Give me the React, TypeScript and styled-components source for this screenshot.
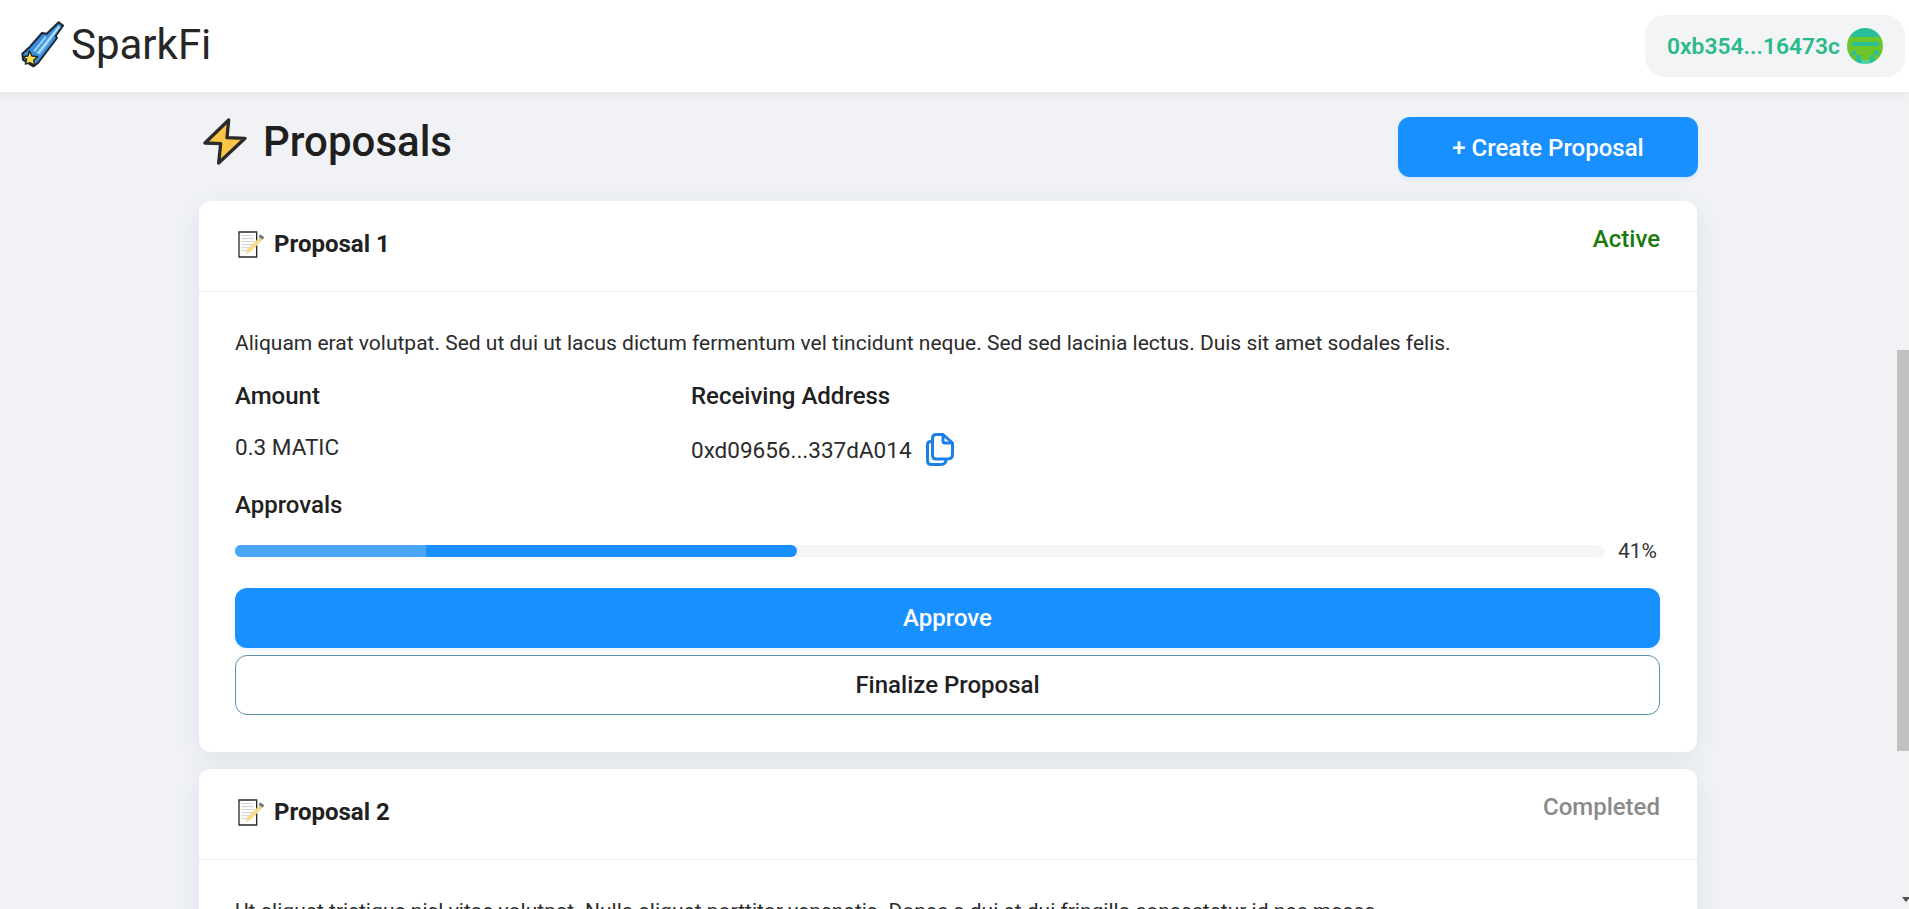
import React from "react";
import styled, { createGlobalStyle } from "styled-components";

const Global = createGlobalStyle`
  html, body { margin: 0; padding: 0; height: 100%; overflow: hidden; }
  body { font-family: Roboto, "Liberation Sans", sans-serif; color: #212121; background: #f0f2f5; }
  * { box-sizing: border-box; }
`;

const Page = styled.div`
  position: relative;
  height: 909px;
  overflow: hidden;
  background: #f0f2f5;
`;
const TopBar = styled.header`
  position: relative;
  z-index: 2;
  height: 92px;
  background: #fff;
  box-shadow: 0 2px 8px rgba(0, 0, 0, 0.06);
  display: flex;
  align-items: center;
  justify-content: space-between;
  padding: 0 4px 0 20px;
`;
const Brand = styled.div`
  display: flex;
  align-items: center;
  gap: 7px;
  font-size: 42px;
  font-weight: 400;
  line-height: 47px;
  margin-top: -3px;
  color: #262626;
`;
const Wallet = styled.div`
  width: 260px;
  height: 62px;
  border-radius: 20px;
  background: #f3f4f6;
  display: flex;
  align-items: center;
  gap: 7px;
  padding-left: 22px;
  font-size: 22.8px;
  font-weight: 600;
  color: #2ab98a;
`;
const Main = styled.main`
  padding: 25px 0 0 199px;
  width: 1697px;
`;
const TitleRow = styled.div`
  display: flex;
  justify-content: space-between;
  align-items: flex-start;
  padding-left: 4px;
  margin-bottom: 24px;
`;
const Title = styled.h1`
  margin: 1px 0 0;
  display: flex;
  align-items: center;
  gap: 16px;
  font-size: 42px;
  line-height: 47px;
  font-weight: 500;
  color: #1f1f1f;
`;
const PrimaryButton = styled.button<{ $wide?: boolean }>`
  width: ${(p) => (p.$wide ? "100%" : "300px")};
  height: 60px;
  margin-right: ${(p) => (p.$wide ? "0" : "-1px")};
  padding: ${(p) => (p.$wide ? "0" : "2px 0 0")};
  border: none;
  border-radius: 12px;
  background: #1890ff;
  color: #fff;
  font-family: inherit;
  font-size: 24px;
  font-weight: 500;
  box-shadow: 0 2px 4px rgba(24, 144, 255, 0.12);
`;
const OutlineButton = styled.button`
  width: 100%;
  height: 60px;
  margin-top: 7px;
  border: 1px solid #5a8fab;
  border-radius: 12px;
  background: #fff;
  color: #1f1f1f;
  font-family: inherit;
  font-size: 24px;
  font-weight: 500;
`;
const Card = styled.section`
  background: #fff;
  border-radius: 12px;
  margin-bottom: 17px;
  box-shadow: 0 6px 24px rgba(120, 135, 170, 0.14);
`;
const CardHead = styled.div`
  height: 91px;
  border-bottom: 1px solid #eeeff1;
  display: flex;
  justify-content: space-between;
  align-items: flex-start;
  padding: 24px 37px 0 36px;
`;
const CardName = styled.div`
  display: flex;
  align-items: center;
  gap: 9px;
  padding: 6px 0 0 3px;
  font-size: 24px;
  line-height: 27px;
  font-weight: 700;
  color: #212121;
`;
const Status = styled.div<{ $color: string }>`
  font-size: 24px;
  line-height: 28px;
  font-weight: 500;
  color: ${(p) => p.$color};
`;
const CardBody = styled.div`
  padding: 37px 37px 37px 36px;
`;
const Description = styled.p`
  margin: 0 0 25px;
  font-size: 21px;
  line-height: 28px;
  color: #2b2b2b;
`;
const Facts = styled.div`
  display: flex;
  margin-bottom: 25px;
`;
const Fact = styled.div<{ $width?: number }>`
  width: ${(p) => (p.$width ? `${p.$width}px` : "auto")};
`;
const Label = styled.div`
  font-size: 24px;
  line-height: 28px;
  font-weight: 500;
  color: #212121;
  margin-bottom: 23px;
`;
const ApprovalLabel = styled(Label)`
  margin-bottom: 18px;
`;
const Value = styled.div`
  display: flex;
  align-items: flex-start;
  font-size: 22.5px;
  line-height: 28px;
  color: #2b2b2b;
`;
const Address = styled.div`
  display: flex;
  align-items: center;
  gap: 14px;
  height: 33px;
  font-size: 22.5px;
  line-height: 28px;
  color: #2b2b2b;
`;
const ProgressRow = styled.div`
  display: flex;
  align-items: center;
  height: 28px;
  margin-bottom: 23px;
`;
const Track = styled.div`
  position: relative;
  width: 1370px;
  height: 12px;
  border-radius: 6px;
  background: #f5f5f5;
  overflow: hidden;
`;
const Fill = styled.div`
  height: 100%;
  border-radius: 6px;
  background: #1890ff;
`;
const FillPart = styled.div`
  height: 100%;
  background: #4ba6fb;
`;
const Percent = styled.span`
  margin-left: 13px;
  font-size: 21px;
  color: #333;
`;
const Scrollbar = styled.div`
  position: absolute;
  top: 92px;
  right: 0;
  bottom: 0;
  width: 12px;
  background: #f1f2f4;
  overflow: hidden;
`;
const Thumb = styled.div`
  position: absolute;
  top: 258px;
  left: 0;
  width: 100%;
  height: 401px;
  background: #c1c1c1;
`;
const ArrowDown = styled.div`
  position: absolute;
  bottom: 7px;
  left: 5px;
  border-left: 4px solid transparent;
  border-right: 4px solid transparent;
  border-top: 5px solid #505050;
`;

const Comet = () => (
  <svg width="44" height="47" viewBox="30 33 132 141" aria-hidden>
    <path d="M146 37 L159 47 L137 78 L141 84 L84 159 L70 169 L39 150 L37 131 L60 110 L96 69 L110 71 Z" fill="#3a8edb" stroke="#1d2733" strokeWidth="6" strokeLinejoin="round" />
    <path d="M146 46 L78 128 L90 136 L152 52 Z" fill="#6db8ee" />
    <path d="M146 48 L84 128 L86 131 L149 51 Z" fill="#d5eeff" />
    <path d="M106 78 L70 122 L74 126 L110 82 Z" fill="#a5d8f7" />
    <path d="M58 123 L66 138 L83 140 L71 151 L74 166 L60 158 L46 162 L50 148 L38 140 L54 138 Z" fill="#fde047" stroke="#222" strokeWidth="4" strokeLinejoin="round" />
  </svg>
);

const Bolt = () => (
  <svg width="44" height="47" viewBox="24 24 132 141" aria-hidden>
    <path d="M101 30 L30 99 L77 101 L71 159 L150 85 L96 83 Z" fill="#fcc548" stroke="#2a2a2a" strokeWidth="10" strokeLinejoin="round" />
  </svg>
);

const Memo = () => (
  <svg width="27" height="27" viewBox="24 24 81 81" aria-hidden>
    <path d="M27 27 H80 V102 H27 Z" fill="#fff" stroke="#2a2a2a" strokeWidth="4" />
    <path d="M34 38 H70 M34 47 H72 M34 56 H72 M34 65 H66 M34 74 H60 M34 83 H52" stroke="#cfcfcf" strokeWidth="3" />
    <path d="M46 92 L52 78 L90 42 L98 50 L60 88 Z" fill="#f5dd8c" />
    <path d="M90 34 L103 43 L97 50 L86 41 Z" fill="#777" />
  </svg>
);

const CopyIcon = () => (
  <svg width="28" height="33" viewBox="0 0 28 33" fill="none" stroke="#1a7fe6" strokeWidth="3" strokeLinejoin="round" strokeLinecap="round" aria-hidden>
    <path d="M10 1.5 H17 L26.5 10 V21 Q26.5 26 22 26 H10 Q6.5 26 6.5 22 V5.5 Q6.5 1.5 10 1.5 Z" />
    <path d="M17 2 V8 Q17 10 19 10 H26" />
    <path d="M6.5 8.5 H5 Q1.5 8.5 1.5 12 V27.5 Q1.5 31.5 5.5 31.5 H15 Q20 31.5 20 26.5" />
  </svg>
);

const AVATAR_ROWS = [
  "tttttttt",
  "tttttttt",
  "gggggggg",
  "gttttttg",
  "gggggggg",
  "gtggggtg",
  "tgtggtgt",
  "tttllttt",
];

const AvatarShape = styled.svg`
  flex: none;
  border-radius: 50%;
`;

const Avatar = () => (
  <AvatarShape width="36" height="36" viewBox="0 0 8 8" shapeRendering="crispEdges" aria-hidden>
    {AVATAR_ROWS.map((row, y) =>
      row.split("").map((c, x) => (
        <rect
          key={`${x}-${y}`}
          x={x}
          y={y}
          width="1"
          height="1"
          fill={c === "g" ? "#6cc52a" : c === "l" ? "#4fd0a8" : "#2abf9a"}
        />
      ))
    )}
  </AvatarShape>
);

export default function App() {
  return (
    <Page>
      <Global />
      <TopBar>
        <Brand>
          <Comet />
          SparkFi
        </Brand>
        <Wallet>
          0xb354...16473c
          <Avatar />
        </Wallet>
      </TopBar>
      <Main>
        <TitleRow>
          <Title>
            <Bolt />
            Proposals
          </Title>
          <PrimaryButton>+ Create Proposal</PrimaryButton>
        </TitleRow>
        <Card>
          <CardHead>
            <CardName>
              <Memo />
              Proposal 1
            </CardName>
            <Status $color="#177a0b">Active</Status>
          </CardHead>
          <CardBody>
            <Description>
              Aliquam erat volutpat. Sed ut dui ut lacus dictum fermentum vel tincidunt neque. Sed sed lacinia lectus. Duis sit amet sodales felis.
            </Description>
            <Facts>
              <Fact $width={456}>
                <Label>Amount</Label>
                <Value>0.3 MATIC</Value>
              </Fact>
              <Fact>
                <Label>Receiving Address</Label>
                <Address>
                  0xd09656...337dA014
                  <CopyIcon />
                </Address>
              </Fact>
            </Facts>
            <ApprovalLabel>Approvals</ApprovalLabel>
            <ProgressRow>
              <Track>
                <Fill style={{ width: "41%" }}>
                  <FillPart style={{ width: "34%" }} />
                </Fill>
              </Track>
              <Percent>41%</Percent>
            </ProgressRow>
            <PrimaryButton $wide>Approve</PrimaryButton>
            <OutlineButton>Finalize Proposal</OutlineButton>
          </CardBody>
        </Card>
        <Card>
          <CardHead>
            <CardName>
              <Memo />
              Proposal 2
            </CardName>
            <Status $color="#8a8a8a">Completed</Status>
          </CardHead>
          <CardBody>
            <Description>
              Ut aliquet tristique nisl vitae volutpat. Nulla aliquet porttitor venenatis. Donec a dui et dui fringilla consectetur id nec massa.
            </Description>
          </CardBody>
        </Card>
      </Main>
      <Scrollbar>
        <Thumb />
        <ArrowDown />
      </Scrollbar>
    </Page>
  );
}
